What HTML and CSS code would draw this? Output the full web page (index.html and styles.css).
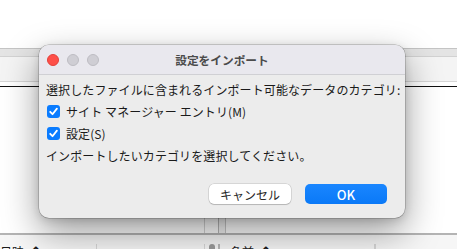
FILE: index.html
```html
<!DOCTYPE html>
<html lang="ja">
<head>
    <meta charset="UTF-8">
    <title>設定をインポート</title>
    <link rel="stylesheet" href="styles.css">
</head>
<body>
    <div class="app">
        <div class="toolbar"></div>
        <div class="tabbar"></div>
        <div class="filter"></div>
        <div class="panes">
            <div class="pane left"></div>
            <div class="splitter"></div>
            <div class="pane right"></div>
        </div>
        <div class="listhead">
            <div class="col col-date">接続日時<span class="caret">⌃</span></div>
            <div class="col col-blank"></div>
            <div class="knob-cell"><span class="knob"></span></div>
            <div class="col col-name">名前<span class="caret">⌃</span></div>
            <div class="col"></div>
        </div>
    </div>

    <div class="dialog">
        <div class="titlebar">
            <div class="lights">
                <span class="light close"></span>
                <span class="light"></span>
                <span class="light"></span>
            </div>
            <div class="title">設定をインポート</div>
        </div>
        <div class="body">
            <div class="row">選択したファイルに含まれるインポート可能なデータのカテゴリ:</div>
            <label class="row check">
                <span class="box"><svg viewBox="0 0 13 13" width="13" height="13"><path d="M3.2 6.8 L5.5 9.2 L9.9 3.6" fill="none" stroke="#fff" stroke-width="1.8" stroke-linecap="round" stroke-linejoin="round"/></svg></span>
                サイト マネージャー エントリ(M)
            </label>
            <label class="row check">
                <span class="box"><svg viewBox="0 0 13 13" width="13" height="13"><path d="M3.2 6.8 L5.5 9.2 L9.9 3.6" fill="none" stroke="#fff" stroke-width="1.8" stroke-linecap="round" stroke-linejoin="round"/></svg></span>
                設定(S)
            </label>
            <div class="row">インポートしたいカテゴリを選択してください。</div>
            <div class="buttons">
                <button class="btn cancel">キャンセル</button>
                <button class="btn ok">OK</button>
            </div>
        </div>
    </div>
</body>
</html>
```

FILE: styles.css
```css
* {
    box-sizing: border-box;
}

body {
    margin: 0;
    width: 457px;
    height: 249px;
    overflow: hidden;
    background: #ffffff;
    font-family: "Noto Sans CJK JP", sans-serif;
    color: #1a1a1a;
    position: relative;
}

/* background window */
.app {
    display: flex;
    flex-direction: column;
    height: 249px;
}

.toolbar {
    height: 48px;
    background: #ffffff;
}

.tabbar {
    height: 9px;
    background: #e4e4e4;
    border-top: 1px solid #c4c4c4;
    border-bottom: 1px solid #d2d2d2;
}

.filter {
    height: 30px;
    background: #f4f4f4;
    border-bottom: 1px solid #111111;
    box-shadow: inset 0 -4px 0 #ffffff, inset 0 -5px 0 #d6d6d6;
}

.panes {
    flex: 1;
    display: flex;
    border-bottom: 2px solid #b4b4b4;
}

.pane.left {
    width: 205px;
    border-right: 1px solid #d4d4d4;
}

.splitter {
    width: 21px;
    border-right: 1px solid #c8c8c8;
    box-shadow: inset -6px 0 0 #f4f4f4, inset -7px 0 0 #b8b8b8;
}

.pane.right {
    flex: 1;
}

.listhead {
    height: 14px;
    display: flex;
    font-size: 12px;
    line-height: 14px;
    padding-top: 9px;
    overflow: hidden;
    background: #f6f6f6;
}

.col {
    border-right: 1px solid #d6d6d6;
    white-space: nowrap;
    overflow: hidden;
}

.col-date {
    width: 121px;
    margin-left: -24px;
}

.col-blank {
    width: 108px;
}

.knob-cell {
    width: 15px;
    display: flex;
    justify-content: center;
    border-right: 2px solid #b8b8b8;
}

.knob {
    width: 6px;
    height: 12px;
    border-radius: 3px;
    background: #9a9a9a;
}

.col-name {
    width: 151px;
    padding-left: 6px;
    margin-left: 4px;
}

.caret {
    font-size: 14px;
    margin-left: 6px;
    font-weight: bold;
}

/* dialog */
.dialog {
    position: absolute;
    left: 39px;
    top: 45px;
    width: 366px;
    height: 173px;
    border-radius: 10px;
    background: #ececec;
    overflow: hidden;
    box-shadow: 0 0 0 0.5px rgba(0, 0, 0, 0.3), 0 14px 36px rgba(0, 0, 0, 0.4), 0 2px 8px rgba(0, 0, 0, 0.14);
}

.titlebar {
    height: 30px;
    display: flex;
    align-items: center;
    position: relative;
    background: #e9e8ee;
    border-bottom: 1px solid #d0d0d4;
}

.lights {
    display: flex;
    gap: 8px;
    padding-left: 8px;
}

.light {
    width: 12px;
    height: 12px;
    border-radius: 50%;
    background: #cfced4;
    border: 0.5px solid #bdbcc2;
}

.light.close {
    background: #fe4f48;
    border-color: #e2403b;
}

.title {
    position: absolute;
    left: 0;
    right: 0;
    text-align: center;
    font-size: 11.7px;
    font-weight: bold;
    color: #4b4b4b;
}

.body {
    padding: 3px 0 0 7px;
    font-size: 12px;
    letter-spacing: 0.1px;
}

.row {
    height: 22px;
    display: flex;
    align-items: center;
    white-space: nowrap;
}

.check {
    padding-left: 1px;
}

.box {
    width: 13px;
    height: 13px;
    border-radius: 3px;
    background: #0a7cff;
    margin-right: 6px;
    display: flex;
}

.buttons {
    display: flex;
    justify-content: flex-end;
    gap: 14px;
    padding-right: 18px;
    margin-top: 18px;
}

.btn {
    width: 82px;
    height: 20px;
    border: none;
    border-radius: 5px;
    font-family: "Noto Sans CJK JP", sans-serif;
    font-size: 12px;
    padding: 0;
}

.cancel {
    background: #ffffff;
    color: #262626;
    box-shadow: 0 0 0 0.5px rgba(0, 0, 0, 0.18), 0 1px 1px rgba(0, 0, 0, 0.15);
}

.ok {
    background: linear-gradient(#1a86ff, #0a79f7);
    color: #ffffff;
    font-size: 13px;
    font-weight: 500;
}
```
